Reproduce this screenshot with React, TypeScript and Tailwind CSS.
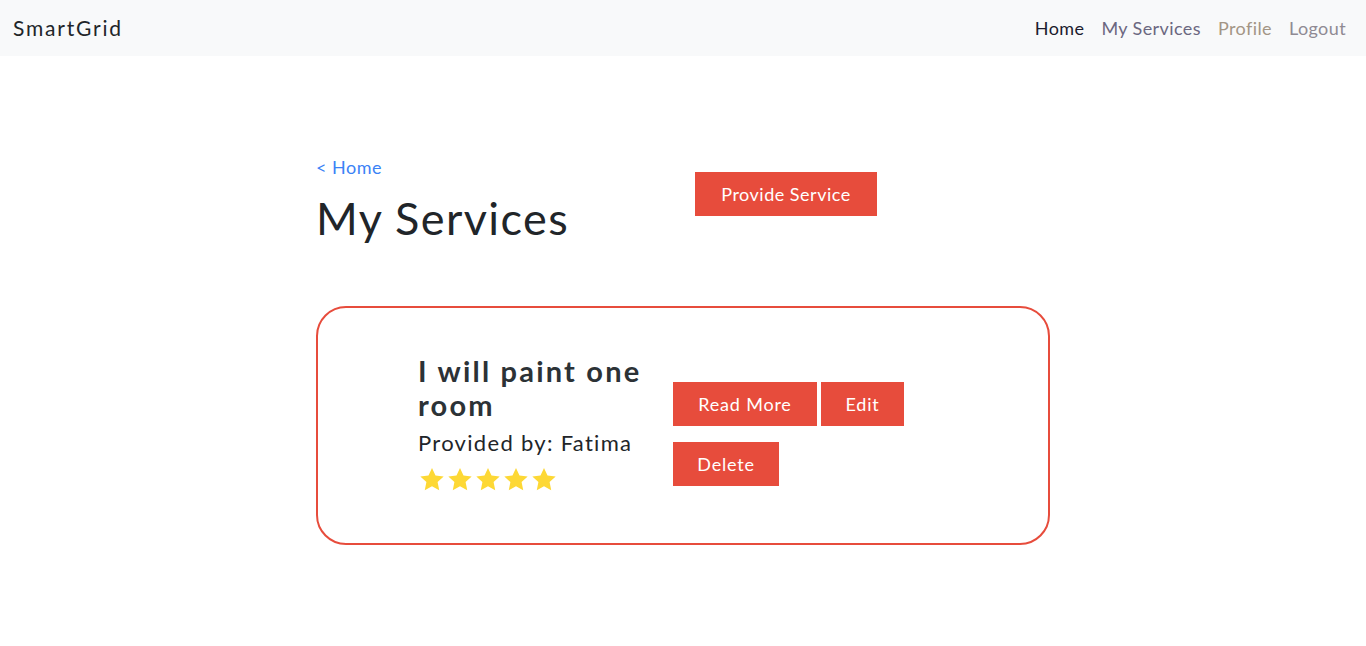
import React from "react";

const font = { fontFamily: "Lato, 'Open Sans', sans-serif" };

function Star() {
  return (
    <svg viewBox="0 0 24 24" className="h-[28px] w-[28px]" fill="#fdd835">
      <path d="M12 1.8l3 6.4 7 .8-5.2 4.8 1.4 6.9L12 17.3l-6.2 3.4 1.4-6.9L2 9l7-.8z" />
    </svg>
  );
}

export default function App() {
  return (
    <div className="min-h-screen bg-white text-[#212529]" style={font}>
      <nav className="flex h-14 items-center justify-between bg-[#f8f9fa] pl-[13px] pr-5">
        <span className="text-[21px] tracking-[1.8px] text-[#212529]">SmartGrid</span>
        <div className="flex items-center gap-[17px] text-[18px] tracking-[0.4px]">
          <a className="text-[#1c1c2e]">Home</a>
          <a className="text-[#6b6780]">My Services</a>
          <a className="text-[#a39585]">Profile</a>
          <a className="text-[#8f8a93]">Logout</a>
        </div>
      </nav>

      <main className="mx-auto w-[734px] pt-[100px]">
        <div className="flex items-start">
          <div className="w-[379px]">
            <a className="block text-[18px] leading-[22px] tracking-[0.5px] text-[#3b82f6]">&lt; Home</a>
            <h1 className="mt-[12px] text-[45px] leading-[56px] tracking-[1.4px]">My Services</h1>
          </div>
          <button className="mt-[16px] h-[44px] w-[182px] bg-[#e74c3c] text-[18px] tracking-[0.5px] text-white">
            Provide Service
          </button>
        </div>

        <div className="mt-[60px] flex h-[239px] rounded-[30px] border-2 border-[#e74c3c] pl-[100px] pt-[46px]">
          <div className="w-[255px]">
            <h2 className="text-[29px] font-bold leading-[34px] tracking-[2.2px] text-[#2c3236]">
              I will paint one room
            </h2>
            <p className="mt-[6px] text-[22px] leading-[30px] tracking-[1.3px] text-[#212529]">
              Provided by: Fatima
            </p>
            <div className="mt-[8px] flex">
              <Star />
              <Star />
              <Star />
              <Star />
              <Star />
            </div>
          </div>
          <div className="w-[240px] pt-[28px]">
            <div className="flex flex-wrap gap-x-[4px] gap-y-[16px]">
              <button className="h-[44px] w-[144px] bg-[#e74c3c] text-[18px] tracking-[0.8px] text-white">
                Read More
              </button>
              <button className="h-[44px] w-[83px] bg-[#e74c3c] text-[18px] tracking-[0.8px] text-white">
                Edit
              </button>
              <button className="h-[44px] w-[106px] bg-[#e74c3c] text-[18px] tracking-[0.8px] text-white">
                Delete
              </button>
            </div>
          </div>
        </div>
      </main>
    </div>
  );
}
